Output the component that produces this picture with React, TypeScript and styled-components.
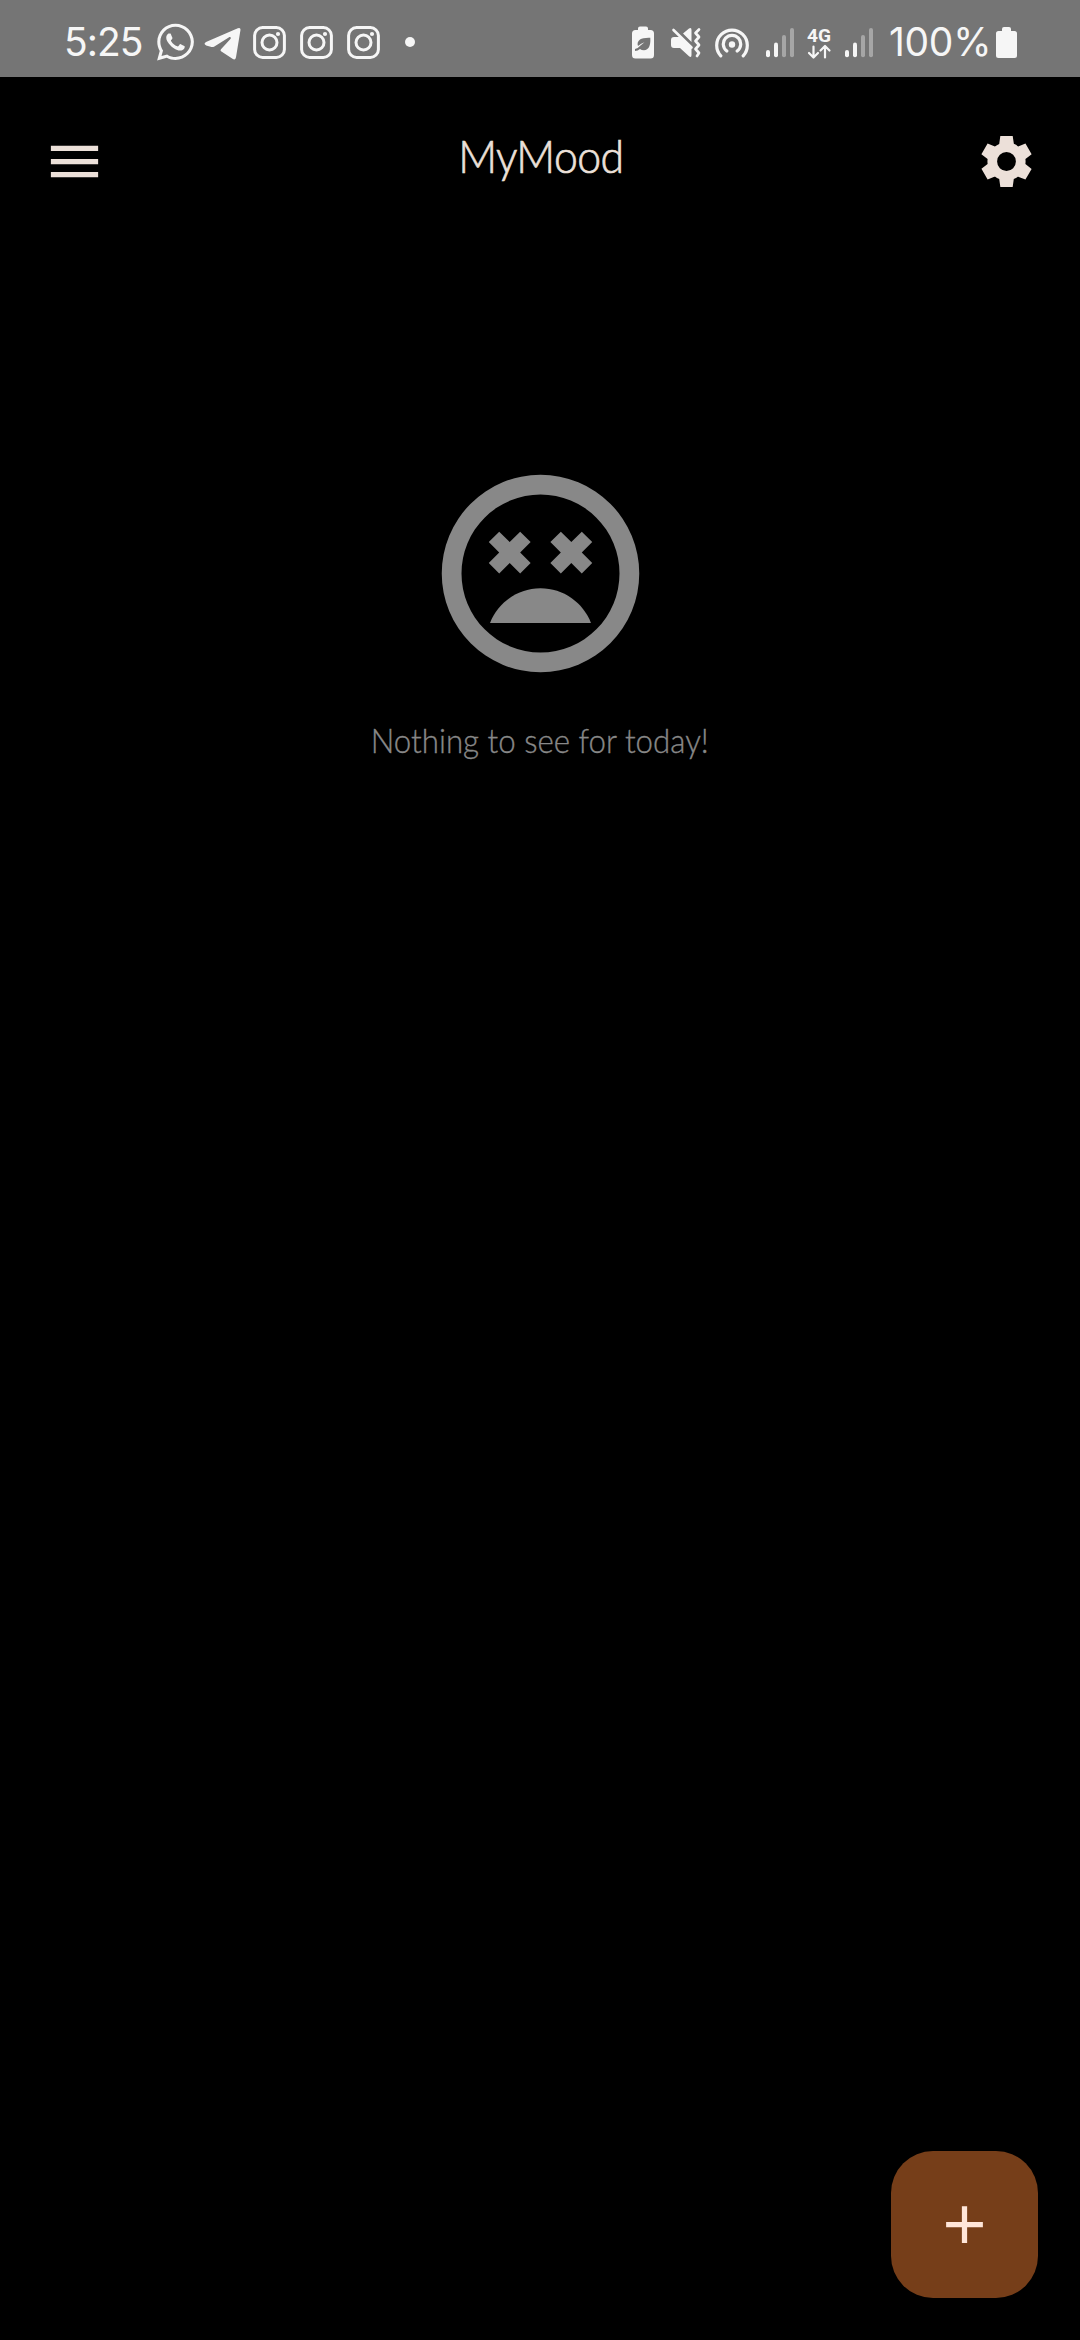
import React from "react";
import styled, { createGlobalStyle } from "styled-components";
import { FaWhatsapp } from "react-icons/fa";
import { MdAdd, MdMenu } from "react-icons/md";

const GlobalStyle = createGlobalStyle`
  * { box-sizing: border-box; }
  body { margin: 0; background: #000; }
`;

const Screen = styled.div`
  display: flex;
  flex-direction: column;
  width: 1080px;
  height: 2340px;
  background: #000;
  overflow: hidden;
`;

const StatusBar = styled.header`
  display: flex;
  align-items: center;
  flex: none;
  height: 77px;
  padding: 7px 63px 0 64px;
  background: #757575;
  color: #f6f6f6;
`;

const StatusText = styled.span<{ $width: number; $spacing: number; $gap?: number }>`
  width: ${(p) => p.$width}px;
  margin-left: ${(p) => p.$gap ?? 0}px;
  flex: none;
  font: 400 39px/40px Inter, Roboto, sans-serif;
  letter-spacing: ${(p) => p.$spacing}px;
  white-space: nowrap;
`;

const Glyph = styled.svg<{ $gap?: number }>`
  display: block;
  flex: none;
  height: 40px;
  margin-left: ${(p) => p.$gap ?? 0}px;
  fill: currentColor;
`;

const WhatsappMark = styled(FaWhatsapp)`
  display: block;
  flex: none;
  width: 37px;
  height: 42px;
`;

const Spacer = styled.div`
  flex: 1;
`;

const NetworkText = styled.text`
  font: 700 19px Roboto, sans-serif;
`;

const AppBar = styled.nav`
  display: flex;
  align-items: center;
  justify-content: space-between;
  flex: none;
  height: 169px;
  padding: 0 42px 0 43px;
  color: #ece0d9;
`;

const IconButton = styled.button`
  display: flex;
  align-items: center;
  justify-content: center;
  width: 63px;
  height: 63px;
  padding: 0;
  border: 0;
  background: none;
  color: inherit;
`;

const Title = styled.h1`
  margin: 0;
  padding-bottom: 11px;
  font: 300 46px/60px Lato, "Open Sans", sans-serif;
  letter-spacing: -0.6px;
  -webkit-text-stroke: 0.7px currentColor;
  transform: scaleX(0.93);
`;

const EmptyState = styled.main`
  display: flex;
  flex-direction: column;
  align-items: center;
  flex: 1;
  padding-top: 209px;
  color: #888;
`;

const Face = styled.svg`
  display: block;
  width: 237px;
  height: 237px;
  fill: currentColor;
`;

const Caption = styled.p`
  margin: 24px 0 0;
  font: 300 34px/48px Lato, "Open Sans", sans-serif;
  -webkit-text-stroke: 0.35px currentColor;
  white-space: nowrap;
  transform: scaleX(0.92);
`;

const BottomArea = styled.footer`
  display: flex;
  justify-content: flex-end;
  flex: none;
  padding: 0 42px 42px;
`;

const AddButton = styled.button`
  display: flex;
  align-items: center;
  justify-content: center;
  width: 147px;
  height: 147px;
  padding: 0;
  border: 0;
  border-radius: 42px;
  background: #763e19;
  color: #ffe6d9;
`;

const InstagramMark = ({ gap }: { gap: number }) => (
  <Glyph $gap={gap} width={33} viewBox="0 0 33 40">
    <rect x="1.6" y="5.6" width="29.8" height="29.8" rx="8" fill="none" stroke="currentColor" strokeWidth="3" />
    <circle cx="16.5" cy="20.5" r="7.5" fill="none" stroke="currentColor" strokeWidth="3" />
    <circle cx="25" cy="12" r="2.1" />
  </Glyph>
);

const Signal = ({ gap }: { gap: number }) => (
  <Glyph $gap={gap} width={28} viewBox="0 0 28 40">
    <rect x="0" y="28" width="4" height="7.3" rx="2" />
    <rect x="8" y="20.5" width="4" height="14.8" rx="2" />
    <rect x="16" y="13" width="4" height="22.3" rx="2" opacity=".38" />
    <rect x="24" y="6" width="4" height="29.3" rx="2" opacity=".38" />
  </Glyph>
);

export default function App() {
  return (
    <Screen>
      <GlobalStyle />
      <StatusBar>
        <StatusText $width={93} $spacing={-1}>5:25</StatusText>
        <WhatsappMark />
        <Glyph $gap={10} width={37} viewBox="0 0 37 40">
          <path d="M2 20.1L33.8 6.2Q37 5 36.4 8.5L32 35.2Q31.3 38.6 28.5 36.7L17.4 29.6Q15.8 28.5 17.2 27L26.4 17C27.5 15.5 26.3 14.5 24.7 15.5L10 24.7Q8.8 25.3 7.5 25L2.2 23.4Q-1 22 2 20.1Z" />
        </Glyph>
        <InstagramMark gap={12} />
        <InstagramMark gap={14} />
        <InstagramMark gap={14} />
        <Glyph $gap={25} width={10} viewBox="0 0 10 40">
          <circle cx="5" cy="20" r="5" />
        </Glyph>
        <Spacer />
        <Glyph width={22} viewBox="0 0 22 40">
          <path d="M6 8V6.5Q6 4.5 8 4.5H14Q16 4.5 16 6.5V8H18.5Q22 8 22 11.5V33Q22 36.5 18.5 36.5H3.5Q0 36.5 0 33V11.5Q0 8 3.5 8Z" />
          <path fill="#757575" d="M18.3 15.8Q19 28 12 28.2Q9.5 28.2 8 26.9Q5.8 29 3 29V27Q6 26.6 8.5 23.6L12.5 20.3Q9 21.2 6 24Q4.5 20.5 8 17.6Q11 15.5 18.3 15.8Z" />
        </Glyph>
        <Glyph $gap={17} width={30} viewBox="0 0 30 40">
          <path d="M3 15H8.5L20.5 26V33Q20.5 36 18 34.3L9 26H3Q0 26 0 23V18Q0 15 3 15ZM12 11.5L18 6.5Q20.5 5 20.5 8V20Z" />
          <path d="M2.5 8L20.5 25.5" fill="none" stroke="currentColor" strokeWidth="2.6" strokeLinecap="round" />
          <path d="M28 7.5L24.5 11L28 15L24.5 19L28 23L24.5 27L28 31L26 34" fill="none" stroke="currentColor" strokeWidth="2.7" strokeLinecap="round" strokeLinejoin="round" />
        </Glyph>
        <Glyph $gap={14} width={34} viewBox="0 0 34 40">
          <circle cx="17" cy="22.5" r="3.2" />
          <path d="M5.8 33.8A15.3 15.3 0 1 1 28.2 33.8M11.8 29A8.7 8.7 0 1 1 22.2 29" fill="none" stroke="currentColor" strokeWidth="3.2" strokeLinecap="round" />
        </Glyph>
        <Signal gap={17} />
        <Glyph $gap={13} width={25} viewBox="0 0 25 40">
          <NetworkText x="0" y="19.5" textLength="24" lengthAdjust="spacingAndGlyphs">4G</NetworkText>
          <path d="M6.5 24.5V35M2 31L6.5 35.5L11 31M18 35.5V25M13.5 28.5L18 24L22.5 28.5" fill="none" stroke="currentColor" strokeWidth="2.2" strokeLinecap="round" strokeLinejoin="round" />
        </Glyph>
        <Signal gap={13} />
        <StatusText $gap={16} $width={107} $spacing={-0.3}>100%</StatusText>
        <Glyph width={21} viewBox="0 0 21 40">
          <path d="M6 9V7Q6 5 8 5H13Q15 5 15 7V9H18.5Q21 9 21 11.5V33.5Q21 36 18.5 36H2.5Q0 36 0 33.5V11.5Q0 9 2.5 9Z" />
        </Glyph>
      </StatusBar>

      <AppBar>
        <IconButton aria-label="Menu">
          <MdMenu size={63} />
        </IconButton>
        <Title>MyMood</Title>
        <IconButton aria-label="Settings">
          <svg width={61} height={61} viewBox="0 0 24 24" fill="currentColor">
            <path d="M19.44 12.99l-.01.02c.04-.33.08-.67.08-1.01 0-.34-.03-.66-.07-.99l.01.02 2.44-1.92-2.43-4.22-2.87 1.16.01.01c-.52-.4-1.09-.74-1.71-1h.01L14.44 2H9.57l-.44 3.07h.01c-.62.26-1.19.6-1.71 1l.01-.01-2.88-1.17-2.44 4.22 2.44 1.92.01-.02c-.04.33-.07.65-.07.99 0 .34.03.68.08 1.01l-.01-.02-2.43 1.91 2.43 4.2 2.88-1.15-.02-.04c.53.41 1.1.75 1.73 1.01h-.03L9.58 22h4.85l.44-3.07h-.01c.62-.26 1.2-.6 1.73-1.01l-.02.04 2.88 1.15 2.43-4.2-2.44-1.92zM12 15.7a3.7 3.7 0 1 1 0-7.4 3.7 3.7 0 0 1 0 7.4z" />
          </svg>
        </IconButton>
      </AppBar>

      <EmptyState>
        <Face viewBox="0 0 24 24">
          <path d="M12 2a10 10 0 1 0 0 20 10 10 0 0 0 0-20zm0 18a8 8 0 1 1 0-16 8 8 0 0 1 0 16z" />
          <path d="M12 13.5c-2.33 0-4.31 1.46-5.11 3.5h10.22c-.8-2.04-2.78-3.5-5.11-3.5z" />
          <path d="M7.82 12l1.06-1.06L9.94 12 11 10.94 9.94 9.88 11 8.82 9.94 7.76 8.88 8.82 7.82 7.76 6.76 8.82l1.06 1.06-1.06 1.06z" />
          <path d="M14.06 12l1.06-1.06L16.18 12l1.06-1.06-1.06-1.06 1.06-1.06-1.06-1.06-1.06 1.06-1.06-1.06L13 8.82l1.06 1.06L13 10.94z" />
        </Face>
        <Caption>Nothing to see for today!</Caption>
      </EmptyState>

      <BottomArea>
        <AddButton aria-label="Add entry">
          <MdAdd size={63} />
        </AddButton>
      </BottomArea>
    </Screen>
  );
}
